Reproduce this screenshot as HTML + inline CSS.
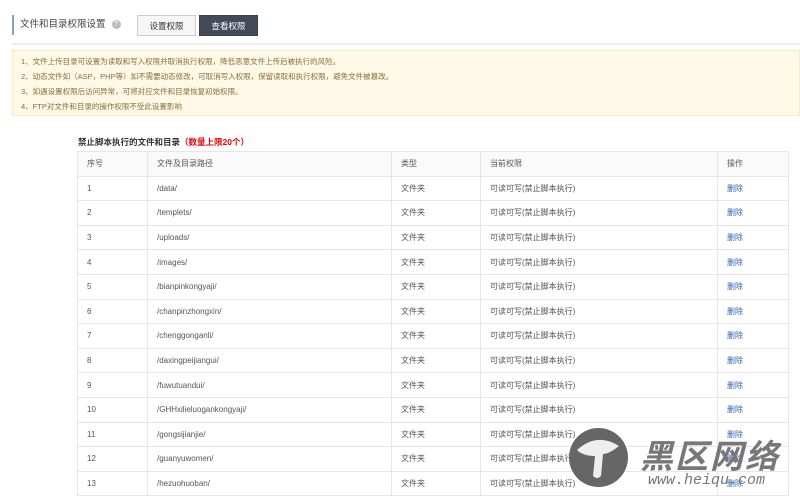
<!DOCTYPE html>
<html><head><meta charset="utf-8"><style>
*{margin:0;padding:0;box-sizing:border-box}
body{width:800px;height:493px;overflow:hidden;background:#fff;font-family:"Liberation Sans","Noto Sans CJK SC",sans-serif;font-size:8px;color:#555;position:relative}
.abs{position:absolute}
.title{left:12px;top:15px;height:20px;border-left:2px solid #8aa0b8;padding-left:6px;line-height:20px;font-size:9.5px;color:#444}
.q{display:inline-block;width:9px;height:9px;border-radius:50%;background:#bbb;color:#fff;font-size:7px;line-height:9px;text-align:center;margin-left:6px;vertical-align:middle}
.btn{top:15px;height:21px;width:59px;line-height:20px;text-align:center;font-size:8.5px}
.sep{left:12px;right:0;top:43px;height:2px;background:#eee}
.note{left:12px;right:0;top:50px;height:66px;background:#fdf9e6;border:1px solid #f3ebc9;padding:3px 0 0 8px;color:#8a6d3b;font-size:7.5px;line-height:15px}
.sub{left:78px;top:136px;font-size:8.5px;font-weight:bold;color:#333}
table{position:absolute;left:77px;top:151px;width:712px;border-collapse:collapse}
td{border:1px solid #e6e6e6;height:24.6px;padding-left:9px;color:#555}
tr:first-child td{background:#fafafa}
a{color:#2d64b3}
</style></head><body>
<div class="abs title">文件和目录权限设置<span class="q">?</span></div>
<div class="abs btn" style="left:137px;border:1px solid #ccc;background:#f6f6f6;color:#333">设置权限</div>
<div class="abs btn" style="left:199px;background:#434b59;color:#fff;border:1px solid #3a414d">查看权限</div>
<div class="abs sep"></div>
<div class="abs note">1、文件上传目录可设置为读取和写入权限并取消执行权限，降低恶意文件上传后被执行的风险。<br>2、动态文件如（ASP，PHP等）如不需要动态修改，可取消写入权限，保留读取和执行权限，避免文件被篡改。<br>3、如遇设置权限后访问异常，可将对应文件和目录恢复初始权限。<br>4、FTP对文件和目录的操作权限不受此设置影响</div>
<div class="abs sub">禁止脚本执行的文件和目录<span style="color:#e00">（数量上限20个）</span></div>
<table>
<tr><td style="width:70px">序号</td><td style="width:244px">文件及目录路径</td><td style="width:89px">类型</td><td style="width:237px">当前权限</td><td>操作</td></tr>
<tr><td>1</td><td>/data/</td><td>文件夹</td><td>可读可写(禁止脚本执行)</td><td><a>删除</a></td></tr>
<tr><td>2</td><td>/templets/</td><td>文件夹</td><td>可读可写(禁止脚本执行)</td><td><a>删除</a></td></tr>
<tr><td>3</td><td>/uploads/</td><td>文件夹</td><td>可读可写(禁止脚本执行)</td><td><a>删除</a></td></tr>
<tr><td>4</td><td>/images/</td><td>文件夹</td><td>可读可写(禁止脚本执行)</td><td><a>删除</a></td></tr>
<tr><td>5</td><td>/bianpinkongyaji/</td><td>文件夹</td><td>可读可写(禁止脚本执行)</td><td><a>删除</a></td></tr>
<tr><td>6</td><td>/chanpinzhongxin/</td><td>文件夹</td><td>可读可写(禁止脚本执行)</td><td><a>删除</a></td></tr>
<tr><td>7</td><td>/chenggonganli/</td><td>文件夹</td><td>可读可写(禁止脚本执行)</td><td><a>删除</a></td></tr>
<tr><td>8</td><td>/daxingpeijiangui/</td><td>文件夹</td><td>可读可写(禁止脚本执行)</td><td><a>删除</a></td></tr>
<tr><td>9</td><td>/fuwutuandui/</td><td>文件夹</td><td>可读可写(禁止脚本执行)</td><td><a>删除</a></td></tr>
<tr><td>10</td><td>/GHHxilieluogankongyaji/</td><td>文件夹</td><td>可读可写(禁止脚本执行)</td><td><a>删除</a></td></tr>
<tr><td>11</td><td>/gongsijianjie/</td><td>文件夹</td><td>可读可写(禁止脚本执行)</td><td><a>删除</a></td></tr>
<tr><td>12</td><td>/guanyuwomen/</td><td>文件夹</td><td>可读可写(禁止脚本执行)</td><td><a>删除</a></td></tr>
<tr><td>13</td><td>/hezuohuoban/</td><td>文件夹</td><td>可读可写(禁止脚本执行)</td><td><a>删除</a></td></tr>
</table>
<div class="abs" style="left:569px;top:428px;width:59px;height:59px;border-radius:50%;background:#666"></div>
<svg class="abs" style="left:569px;top:428px" width="59" height="59"><path d="M8 22 Q28 4 50 18 Q40 26 34 26 L32 48 Q28 52 24 48 L26 28 Q14 28 8 22Z" fill="#eee"/></svg>
<div class="abs" style="left:640px;top:430px;font-size:33px;font-weight:bold;color:#777;letter-spacing:2px;font-style:italic">黑区网络</div>
<div class="abs" style="left:648px;top:472px;font-size:15px;color:#777;font-style:italic;font-family:'Liberation Mono',monospace">www.heiqu.com</div>
</body></html>
